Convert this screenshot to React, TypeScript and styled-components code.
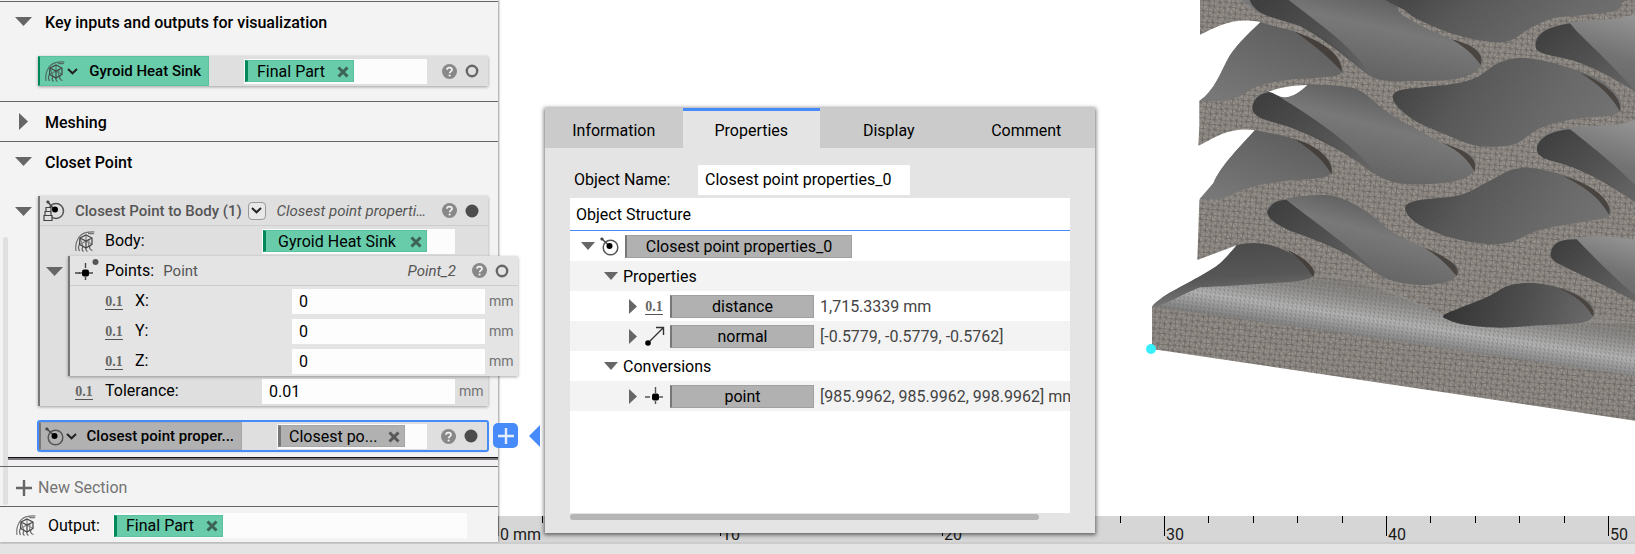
import React from "react";
import styled, { createGlobalStyle, css } from "styled-components";

const GlobalStyle = createGlobalStyle`
  *, *::before, *::after { box-sizing: border-box; }
  body { margin: 0; background: #fff; }
  body, button, input { font-family: Roboto, "Liberation Sans", sans-serif; font-size: 16px; line-height: 20px; color: #000; }
  button { border: 0; padding: 0; background: none; cursor: pointer; }
  svg { display: block; flex: none; }
`;

const Page = styled.div`
  min-height: 100vh;
  display: flex;
  flex-direction: column;
  overflow: hidden;
`;
const Workspace = styled.div`
  flex: 1;
  display: flex;
`;
const Footer = styled.footer`
  height: 12px;
  background: #e4e4e4;
  border-top: 2px solid #cdcdcd;
`;

/* ---------- notebook panel ---------- */

const Notebook = styled.aside`
  position: relative;
  z-index: 1;
  flex: none;
  width: 498px;
  padding-top: 1px;
  background: #f3f3f3;
  box-shadow: 1px 0 2px #999;
`;
const ScrollThumb = styled.div`
  position: absolute;
  left: 3px;
  top: 237px;
  bottom: 37px;
  width: 5px;
  border-radius: 3px;
  background: #e0e0e0;
`;
const Section = styled.section<{ $bottom?: number }>`
  position: relative;
  padding-bottom: ${(p) => p.$bottom ?? 0}px;
  border-top: 1px solid #666;
`;
const SectionHead = styled.div`
  display: flex;
  align-items: center;
  height: 39px;
`;
const SectionTitle = styled.h2`
  margin: 0;
  padding-top: 2px;
  font-size: 16px;
  line-height: 20px;
  font-weight: 500;
`;
const Toggle = styled.button<{ $w: number; $inset: number }>`
  flex: none;
  display: flex;
  align-items: center;
  width: ${(p) => p.$w}px;
  height: 30px;
  padding-left: ${(p) => p.$inset}px;
`;
const BlockLine = styled.div<{ $indent?: boolean }>`
  display: flex;
  align-items: flex-start;
  padding: 15px 10px 0 ${(p) => (p.$indent ? 38 : 0)}px;
`;
const blockLook = css`
  background: #dfdfdf;
  box-shadow: 0 1px 3px rgba(0, 0, 0, 0.35);
`;
const Bar = styled.div<{ $selected?: boolean }>`
  ${blockLook}
  position: relative;
  flex: 1;
  display: flex;
  align-items: center;
  height: 30px;
  ${(p) =>
    p.$selected &&
    css`
      height: 28px;
      outline: 2px solid #478bfa;
      margin-left: 1px;
      border-radius: 1px;
    `}
`;
const SelectedLine = styled.div`
  padding: 16px 11px 7px 38px;
  display: flex;
`;
const Segment = styled.div<{ $green?: boolean; $w: number }>`
  flex: none;
  align-self: stretch;
  display: flex;
  align-items: center;
  gap: 2px;
  width: ${(p) => p.$w}px;
  padding-left: ${(p) => (p.$green ? 5 : 4)}px;
  font-weight: 500;
  background: ${(p) => (p.$green ? "#68ccab" : "#b1b1b1")};
  border: 1px solid ${(p) => (p.$green ? "#5bc19f" : "#a6a6a6")};
  border-left: 2px solid ${(p) => (p.$green ? "#00875c" : "#777")};
`;
const SegmentName = styled.span`
  margin-left: auto;
  padding-right: 7px;
  font-size: 15px;
  white-space: nowrap;
`;
const Slot = styled.div<{ $w?: number; $left?: number }>`
  display: flex;
  align-items: center;
  height: 25px;
  padding: 0 1px;
  background: #fcfcfc;
  margin-left: ${(p) => p.$left ?? 0}px;
  ${(p) => (p.$w ? `flex: none; width: ${p.$w}px;` : "flex: 1;")}
`;
const Chip = styled.span<{ $green?: boolean; $w: number; $pad: number }>`
  display: flex;
  align-items: center;
  justify-content: space-between;
  width: ${(p) => p.$w}px;
  height: 22px;
  padding: 1px 4px 0 ${(p) => p.$pad}px;
  white-space: nowrap;
  background: ${(p) => (p.$green ? "#68ccab" : "#b1b1b1")};
  border: 1px solid ${(p) => (p.$green ? "#5bc19f" : "#a6a6a6")};
  border-left: 3px solid ${(p) => (p.$green ? "#00875c" : "#777")};
`;
const Badges = styled.div`
  display: flex;
  align-items: center;
  gap: 8px;
  margin-left: auto;
  padding-right: 9px;
`;
const Block = styled.div<{ $inner?: boolean }>`
  ${blockLook}
  flex: 1;
  min-width: 0;
  border-left: 2px solid #777;
  ${(p) =>
    p.$inner &&
    css`
      position: relative;
      background: #e4e4e4;
      margin-right: -30px;
    `}
`;
const BlockHead = styled.div`
  position: relative;
  display: flex;
  align-items: center;
  height: 30px;
  white-space: nowrap;
  border-bottom: 1px solid #cdcdcd;
`;
const Nested = styled.div`
  display: flex;
`;
const Field = styled.div<{ $pad: number }>`
  display: flex;
  align-items: center;
  height: 30px;
  padding-left: ${(p) => p.$pad}px;
`;
const FieldIcon = styled.span`
  flex: none;
  width: 30px;
`;
const FieldLabel = styled.label<{ $w: number }>`
  flex: none;
  width: ${(p) => p.$w}px;
`;
const NumberBox = styled.input`
  width: 193px;
  height: 25px;
  padding: 0 7px;
  border: 0;
  background: #fdfdfd;
`;
const Unit = styled.span`
  padding-left: 4px;
  font-size: 14px;
  color: #737373;
`;
const HeadIcon = styled.span`
  flex: none;
  width: 35px;
  padding-left: 2px;
`;
const HeadName = styled.span`
  font-size: 15px;
  font-weight: 500;
  color: #555;
`;
const Muted = styled.span`
  margin-left: 9px;
  font-size: 15px;
  color: #555;
`;
const ObjectName = styled.em`
  flex: 1;
  padding-right: 16px;
  font-size: 15px;
  text-align: right;
  color: #555;
`;
const Overload = styled.button`
  display: grid;
  place-items: center;
  width: 18px;
  height: 18px;
  margin-left: 6px;
  border: 1px solid #999;
  border-radius: 4px;
  background: #e8e8e8;
`;
const Decimal = styled.span`
  display: inline-block;
  width: 18px;
  border-bottom: 1px solid #555;
  font: 700 14px/14px "Liberation Serif", serif;
  color: #666;
  text-align: center;
`;
const AddButton = styled.button`
  position: absolute;
  left: calc(100% + 6px);
  top: 1px;
  display: grid;
  place-items: center;
  width: 25px;
  height: 25px;
  border-radius: 5px;
  background: #478bfa;
`;
const EndOfSection = styled.div`
  height: 9px;
  margin-left: 8px;
  border-top: 1px solid #111;
  background: linear-gradient(#777 2px, #f3f0f3 2px);
`;
const NewSection = styled.button`
  display: flex;
  align-items: center;
  gap: 6px;
  height: 39px;
  padding: 2px 0 0 16px;
  color: #737373;
`;
const OutputRow = styled.div`
  display: flex;
  align-items: center;
  height: 35px;
  padding: 2px 31px 0 16px;
`;
const OutputLabel = styled.span`
  width: 65px;
  margin-left: 12px;
`;

/* ---------- viewport ---------- */

const Viewport = styled.main`
  position: relative;
  flex: 1;
  min-width: 0;
  display: flex;
  flex-direction: column;
  justify-content: space-between;
  align-items: stretch;
`;
const Scene = styled.div`
  display: flex;
  justify-content: flex-end;
  overflow: hidden;
`;
const Ruler = styled.div`
  display: flex;
  height: 26px;
  overflow: hidden;
  background: #d6d6d6;
`;
const Major = styled.div`
  position: relative;
  flex: none;
  display: flex;
  width: 222px;
`;
const Tick = styled.i<{ $major?: boolean }>`
  flex: 1;
  height: ${(p) => (p.$major ? 20 : 7)}px;
  border-left: 1px solid #000;
`;
const MajorLabel = styled.span`
  position: absolute;
  left: 2px;
  bottom: 0;
  line-height: 14px;
  color: #1a1a1a;
`;

/* ---------- properties popover ---------- */

const Popover = styled.section`
  position: absolute;
  left: 47px;
  top: 108px;
  width: 550px;
  background: #e4e4e4;
  box-shadow: 0 1px 4px 1px rgba(0, 0, 0, 0.55);
`;
const Pointer = styled.svg`
  position: absolute;
  left: -16px;
  top: 317px;
`;
const Tabs = styled.div`
  display: grid;
  grid-template-columns: repeat(4, 1fr);
`;
const Tab = styled.button<{ $on?: boolean }>`
  height: 40px;
  padding-top: ${(p) => (p.$on ? 3 : 6)}px;
  background: ${(p) => (p.$on ? "#e4e4e4" : "#cbcbcb")};
  border-top: ${(p) => (p.$on ? "3px solid #478bfa" : "0")};
`;
const PopBody = styled.div`
  padding: 17px 25px 13px 25px;
`;
const NameRow = styled.div`
  display: flex;
  align-items: center;
  height: 30px;
  padding-left: 4px;
`;
const NameLabel = styled.label`
  width: 124px;
`;
const NameBox = styled.input`
  width: 212px;
  height: 30px;
  padding: 0 7px 1px;
  border: 0;
  background: #fff;
`;
const Structure = styled.div`
  height: 315px;
  margin-top: 3px;
  overflow: hidden;
  background: #fff;
`;
const StructureHead = styled.div`
  height: 33px;
  padding: 7px 6px 0;
  border-bottom: 1px solid #478bfa;
`;
const TreeRow = styled.div<{ $depth: number; $shade?: boolean }>`
  display: flex;
  align-items: center;
  height: 30px;
  padding-left: ${(p) => 11 + p.$depth * 23}px;
  background: ${(p) => (p.$shade ? "#f3f3f3" : "#fff")};
`;
const TreeToggle = styled.button<{ $w: number; $inset?: number }>`
  flex: none;
  width: ${(p) => p.$w}px;
  padding-left: ${(p) => p.$inset ?? 0}px;
`;
const TreeIcon = styled.span<{ $w: number }>`
  flex: none;
  width: ${(p) => p.$w}px;
`;
const TreeText = styled.span`
  padding-top: 2px;
`;
const Tag = styled.span<{ $w: number }>`
  flex: none;
  width: ${(p) => p.$w}px;
  height: 23px;
  line-height: 22px;
  text-align: center;
  background: #b1b1b1;
  border: 1px solid #a0a0a0;
  border-left: 2px solid #777;
`;
const Value = styled.span`
  margin-left: 6px;
  padding-top: 2px;
  color: #444;
  white-space: nowrap;
`;
const HScroll = styled.div`
  width: 469px;
  height: 6px;
  margin-top: 1px;
  border-radius: 3px;
  background: #b5b5b5;
`;

/* ---------- icons ---------- */

const Down = ({ w = 17 }: { w?: number }) => (
  <svg width={w} height={w === 17 ? 9 : 8} viewBox="0 0 17 9" preserveAspectRatio="none"><path d="M0 0H17L8.500 9Z" fill="#666" /></svg>
);
const Right = ({ inset = 0 }: { inset?: number }) => (
  <svg width={9 + inset} height="17" viewBox={`${-inset} 0 ${9 + inset} 17`}><path d="M0 0L9 8.500L0 17Z" fill="#666" /></svg>
);
const SmallRight = () => (
  <svg width="8" height="15" viewBox="0 0 8 15"><path d="M0 0L8 7.500L0 15Z" fill="#666" /></svg>
);
const Chevron = () => (
  <svg width="11" height="7" viewBox="0 0 11 7"><path d="M1 1L5.500 5.300L10 1" fill="none" stroke="#222" strokeWidth="2" /></svg>
);
const Cross = () => (
  <svg width="12" height="12" viewBox="0 0 12 12" aria-hidden="true">
    <path d="M1.500 1.500L10.500 10.500M10.500 1.500L1.500 10.500" stroke="#222" strokeOpacity=".62" strokeWidth="3" />
  </svg>
);
const BodyIcon = () => (
  <svg width="20" height="21" viewBox="0 0 20 21" fill="none" stroke="#444" strokeWidth="1.200">
    <path d="M1 20C0 14 2 7 6 4C9 1.500 14 .8 19.500 1M13 2.500C15 2.500 17 3 19 2.500" strokeOpacity=".7" />
    <path d="M5 7L11 4L17 7V13.500L11 17L4.500 13.500ZM5 7L11 10L17 7M11 10V17" />
    <path d="M11 4V10M4.500 13.500L11 10L17 13.500M5 7L8 15.500M14 8.500L13.500 15.500" strokeOpacity=".6" />
    <path d="M4.500 13.500C3 15.500 3.500 18 4.500 20M8 16C6.500 17.500 7 19.500 8.500 20.500M11 17C10.500 19 11.500 20 12.500 20.500M15 15C14 17 15 19 17.500 19.500" strokeOpacity=".8" />
  </svg>
);
const ClosestIcon = () => (
  <svg width="19" height="19" viewBox="0 0 19 19">
    <circle cx="10.500" cy="10.500" r="7.300" fill="none" stroke="#555" strokeWidth="1.500" />
    <path d="M1 1L9 8.500" stroke="#444" strokeWidth="1.400" />
    <circle cx="2" cy="2" r="1.600" fill="#444" />
    <circle cx="9.500" cy="9" r="3" fill="#000" />
  </svg>
);
const ClosestListIcon = () => (
  <svg width="23" height="22" viewBox="-1 0 23 22">
    <circle cx="13" cy="11" r="7.500" fill="none" stroke="#555" strokeWidth="1.500" />
    <path d="M4 1L10 8" stroke="#444" strokeWidth="1.400" />
    <circle cx="5" cy="2" r="1.600" fill="#444" />
    <circle cx="12" cy="9.500" r="3" fill="#000" />
    <path d="M3 7.500H8V11.500H3ZM2 11.500H8V15.500H2ZM1 15.500H9V20.500H1Z" fill="#dfdfdf" stroke="#444" strokeWidth="1.200" />
  </svg>
);
const PointIcon = () => (
  <svg width="27" height="24" viewBox="-3 0 27 24">
    <path d="M0 14H5M13 14H18M10.500 4V9M10.500 18V21" stroke="#444" strokeWidth="1.400" />
    <rect x="7" y="10.500" width="7" height="7" rx="2" fill="#000" />
    <path d="M4 14H7" stroke="#444" strokeWidth="1.400" />
    <circle cx="20.500" cy="3" r="3" fill="#555" />
  </svg>
);
const VectorIcon = () => (
  <svg width="20" height="20" viewBox="0 0 20 20">
    <path d="M3 17L18 2M11 1.500H18.500V9" fill="none" stroke="#333" strokeWidth="1.400" />
    <circle cx="3" cy="17" r="2.800" fill="#000" />
  </svg>
);
const TreePointIcon = () => (
  <svg width="18" height="18" viewBox="0 0 18 18">
    <path d="M0 10H5M13 10H18M10.500 0V6M10.500 14V17" stroke="#555" strokeWidth="1.400" />
    <rect x="7" y="6.500" width="7" height="7" rx="2" fill="#000" />
  </svg>
);
const Help = () => (
  <svg width="15" height="15" viewBox="0 0 15 15">
    <circle cx="7.500" cy="7.500" r="7.500" fill="#888" />
    <path d="M5 5.800C5 2.800 10 2.900 10 5.700C10 7.400 7.600 7.300 7.600 9.300" fill="none" stroke="#f3f3f3" strokeWidth="1.700" />
    <circle cx="7.600" cy="11.500" r="1.100" fill="#f3f3f3" />
  </svg>
);
const State = ({ solid }: { solid?: boolean }) => (
  <svg width="14" height="14" viewBox="0 0 14 14">
    <circle cx="7" cy="7" r={solid ? 6.500 : 5.200} fill={solid ? "#4c4c4c" : "none"} stroke="#666" strokeWidth={solid ? 0 : 2.400} />
  </svg>
);
const Plus = ({ color, size }: { color: string; size: number }) => (
  <svg width={size} height={size} viewBox="0 0 16 16"><path d="M8 0V16M0 8H16" stroke={color} strokeWidth="2.400" /></svg>
);

/* ---------- heat sink mesh ---------- */

type Pt = [number, number];

// Closed Catmull-Rom spline through the points.
function loop(p: Pt[]): string {
  const n = p.length;
  let d = `M${p[0][0]} ${p[0][1]}`;
  for (let i = 0; i < n; i++) {
    const a = p[(i - 1 + n) % n], b = p[i], c = p[(i + 1) % n], e = p[(i + 2) % n];
    d += `C${b[0] + (c[0] - a[0]) / 6} ${b[1] + (c[1] - a[1]) / 6} ${c[0] - (e[0] - b[0]) / 6} ${c[1] - (e[1] - b[1]) / 6} ${c[0]} ${c[1]}`;
  }
  return d + "Z";
}

// A tileable, slightly irregular triangulation.
const CELL = 16;
const CELLS = 12;
function triangulation(): string {
  const node = (i: number, j: number): Pt => {
    const u = ((i % CELLS) + CELLS) % CELLS, v = ((j % CELLS) + CELLS) % CELLS;
    const r = Math.abs(Math.sin(u * 12.9898 + v * 78.233) * 43758.5453) % 1;
    const s = Math.abs(Math.sin(u * 39.346 + v * 11.135) * 24634.6345) % 1;
    return [Math.round(i * CELL + (r - 0.5) * 4), Math.round(j * CELL + (s - 0.5) * 4)];
  };
  let d = "";
  for (let j = -1; j <= CELLS; j++) {
    for (let i = -1; i <= CELLS; i++) {
      const a = node(i, j), b = node(i + 1, j), c = node(i, j + 1), e = node(i + 1, j + 1);
      d += `M${b}L${a}L${c}`;
      d += (i * 7 + j * 5 + 24) % 12 % 3 === 0 ? `M${b}L${c}` : `M${a}L${e}`;
    }
  }
  return d;
}
const meshLines = triangulation();

const silhouette =
  "M180 0V104C235 78 280 50 362 66C320 105 280 145 262 180C240 220 225 270 178 303V375L175 437C225 415 260 380 345 390C300 440 240 500 220 550L178 600L172 780L290 736C265 765 240 795 215 808C150 850 70 880 36 920V1047L1485 1262V0Z";

const fins = [
  "M362 66C420 88 470 85 540 130C590 160 612 190 606 215C600 232 560 230 500 235C420 240 360 250 320 275C280 305 240 304 178 303C225 270 240 220 262 180C280 145 320 105 362 66Z",
  "M345 390C400 402 460 410 510 435C550 460 580 490 577 510C570 540 520 534 460 541C380 548 320 560 280 583L240 598H178L220 550C240 500 300 440 345 390Z",
  "M290 736C360 716 420 740 480 775C520 800 530 820 515 832C490 845 440 848 380 850C300 856 240 860 180 862C110 890 80 915 36 920C70 880 150 850 215 808C240 795 265 765 290 736Z",
];

const tubes: Pt[][] = [
  [[320, -30], [345, 30], [400, 53], [480, 78], [570, 125], [640, 182], [710, 236], [830, 243], [950, 236], [1010, 212], [1028, 178], [1005, 143], [930, 116], [850, 80], [780, 38], [730, -30]],
  [[337, 320], [352, 290], [390, 272], [500, 254], [600, 258], [665, 275], [740, 335], [820, 382], [900, 425], [990, 462], [1007, 495], [980, 532], [900, 550], [780, 550], [700, 520], [620, 460], [540, 415], [440, 378], [360, 355]],
  [[381, 635], [395, 610], [430, 598], [500, 587], [590, 590], [680, 635], [760, 697], [850, 742], [930, 782], [955, 810], [930, 842], [850, 855], [760, 843], [700, 813], [630, 765], [560, 730], [450, 692], [400, 665]],
];
const basins: Pt[][] = [
  [[765, -30], [800, 35], [870, 75], [960, 108], [1050, 125], [1110, 122], [1170, 85], [1240, 55], [1330, 45], [1425, 33], [1445, 10], [1445, -30]],
  [[758, 292], [780, 271], [850, 262], [950, 250], [1010, 232], [1070, 192], [1130, 175], [1200, 180], [1300, 207], [1380, 240], [1432, 285], [1443, 325], [1415, 346], [1300, 358], [1200, 385], [1130, 430], [1070, 440], [1000, 435], [920, 405], [830, 365], [780, 328]],
  [[797, 618], [840, 600], [960, 585], [1050, 542], [1120, 508], [1190, 506], [1290, 532], [1370, 575], [1412, 625], [1400, 652], [1320, 667], [1200, 690], [1110, 726], [1040, 732], [940, 715], [850, 680], [808, 650]],
];
const scoops: Pt[][] = [
  [[1560, 60], [1420, 57], [1290, 68], [1225, 85], [1190, 112], [1187, 138], [1205, 158], [1280, 175], [1360, 205], [1490, 277], [1560, 330]],
  [[1560, 375], [1420, 376], [1320, 380], [1240, 393], [1198, 422], [1191, 450], [1215, 475], [1300, 502], [1400, 548], [1490, 610], [1560, 660]],
  [[1560, 735], [1470, 717], [1400, 710], [1300, 714], [1243, 735], [1232, 765], [1260, 795], [1350, 835], [1490, 907], [1560, 950]],
];
const lowHole: Pt[] = [[911, 946], [960, 924], [1040, 892], [1110, 856], [1190, 850], [1280, 870], [1345, 905], [1362, 940], [1330, 967], [1200, 976], [1080, 983], [980, 975], [925, 960]];

// Shadowed inner walls at the left end of each tube.
const shades = [
  "M327 -5H440C540 75 630 130 700 235C640 195 570 125 480 78C400 50 345 50 327 -5Z",
  "M337 320C345 285 370 278 395 276C500 340 640 430 710 523C620 460 540 415 440 378C370 358 335 350 337 320Z",
  "M381 635C395 604 420 600 440 600C540 680 640 745 710 820C640 765 560 730 450 692C395 665 385 655 381 635Z",
  "M1187 138C1187 100 1225 80 1290 70C1320 110 1390 165 1490 277C1400 220 1320 180 1240 168C1195 158 1187 150 1187 138Z",
  "M1191 450C1190 415 1235 392 1290 388C1330 420 1410 480 1490 560V610C1400 548 1320 504 1240 484C1200 475 1192 460 1191 450Z",
  "M1232 765C1235 725 1265 718 1310 718C1370 780 1430 840 1490 890V907C1400 855 1320 825 1265 795C1240 785 1232 775 1232 765Z",
];
const rims = [
  "M465 95C540 125 600 150 606 215C575 180 530 140 465 95Z",
  "M465 418C540 440 580 480 575 525C555 485 520 455 465 418Z",
  "M435 746C500 775 535 810 519 830C500 800 480 775 435 746Z",
  "M1320 218C1400 250 1445 290 1441 335C1415 290 1380 255 1320 218Z",
  "M935 118C1000 135 1035 160 1022 195C1000 165 980 145 935 118Z",
  "M910 430C990 455 1015 480 1003 515C985 480 960 455 910 430Z",
  "M850 742C930 775 965 800 950 828C925 800 900 770 850 742Z",
  "M1255 865C1330 885 1370 925 1359 950C1335 910 1310 890 1255 865Z",
  "M1270 528C1350 550 1420 600 1408 645C1375 590 1340 565 1270 528Z",
];

const HeatSink = () => (
  <svg width="495" height="430" viewBox="0 0 1485 1290" role="img" aria-label="Gyroid heat sink mesh">
    <defs>
      <pattern id="tri" width={CELL * CELLS} height={CELL * CELLS} patternUnits="userSpaceOnUse" patternTransform="rotate(5)">
        <rect width={CELL * CELLS} height={CELL * CELLS} fill="#98928c" />
        <path d={meshLines} stroke="#686460" strokeWidth="2.400" fill="none" />
      </pattern>
      <pattern id="grain" width="9" height="12" patternUnits="userSpaceOnUse" patternTransform="rotate(-14)">
        <path d="M0 3H5M4 9H9" stroke="#c4c4c4" strokeOpacity=".15" strokeWidth="2.500" />
      </pattern>
      <pattern id="gloss" width="13" height="12" patternUnits="userSpaceOnUse" patternTransform="rotate(7)">
        <path d="M0 0H13M0 6H13M0 0L6 6L13 12M6 0V12" stroke="#4f4f4f" strokeOpacity=".4" strokeWidth="1.800" fill="none" />
      </pattern>
      <linearGradient id="tube" x1="0.250" y1="0.900" x2="0.700" y2="0.100">
        <stop offset="0" stopColor="#5c5c5c" /><stop offset=".3" stopColor="#686868" />
        <stop offset=".62" stopColor="#767676" /><stop offset="1" stopColor="#575757" />
      </linearGradient>
      <linearGradient id="basin" x1="0" y1="0.400" x2="1" y2="0.650">
        <stop offset="0" stopColor="#404040" /><stop offset=".3" stopColor="#555" />
        <stop offset=".7" stopColor="#666" /><stop offset="1" stopColor="#707070" />
      </linearGradient>
      <linearGradient id="scoop" x1="0.300" y1="1" x2="0.700" y2="0">
        <stop offset="0" stopColor="#595959" /><stop offset=".6" stopColor="#707070" /><stop offset="1" stopColor="#939393" />
      </linearGradient>
      <linearGradient id="fin" x1="0.800" y1="0.100" x2="0.200" y2="1">
        <stop offset="0" stopColor="#5a5a5a" /><stop offset="1" stopColor="#757575" />
      </linearGradient>
      <linearGradient id="finLow" x1="0.300" y1="0.100" x2="0.450" y2="1">
        <stop offset="0" stopColor="#484848" /><stop offset=".5" stopColor="#535353" /><stop offset="1" stopColor="#767676" />
      </linearGradient>
      <linearGradient id="shade" x1="0" y1="0.200" x2="1" y2="1">
        <stop offset="0" stopColor="#3b3b3b" /><stop offset=".5" stopColor="#4e4e4e" /><stop offset="1" stopColor="#646464" />
      </linearGradient>
      <linearGradient id="dark" x1="0" y1="0.500" x2="1" y2="0.600">
        <stop offset="0" stopColor="#2e2e2e" /><stop offset=".5" stopColor="#484848" /><stop offset="1" stopColor="#666" />
      </linearGradient>
      <linearGradient id="shine" gradientUnits="userSpaceOnUse" x1="620" y1="810" x2="590" y2="1005">
        <stop offset="0" stopColor="#8d8984" stopOpacity="0" /><stop offset=".35" stopColor="#969593" stopOpacity=".8" />
        <stop offset=".68" stopColor="#c0c0c0" /><stop offset="1" stopColor="#848484" />
      </linearGradient>
    </defs>
    <path d={silhouette} fill="url(#tri)" />
    <path d="M36 920C100 900 140 860 180 858C300 855 430 850 515 832C650 800 760 880 910 946L1200 930L1485 960V1128L500 985Z" fill="url(#shine)" />
    <path d="M36 920C100 900 140 860 180 858C300 855 430 850 515 832C650 830 760 880 910 946L1200 970L1485 970V1128L500 985Z" fill="url(#gloss)" />
    {fins.map((d, i) => (
      <g key={i}><path d={d} fill={i === 2 ? "url(#finLow)" : "url(#fin)"} /><path d={d} fill="url(#grain)" /></g>
    ))}
    {tubes.map((p, i) => (
      <path key={i} d={loop(p)} fill="url(#tube)" />
    ))}
    {basins.map((p, i) => (
      <path key={i} d={loop(p)} fill="url(#basin)" />
    ))}
    {scoops.map((p, i) => (
      <path key={i} d={loop(p)} fill="url(#scoop)" />
    ))}
    <path d={loop(lowHole)} fill="url(#dark)" />
    {shades.map((d, i) => (
      <path key={i} d={d} fill="url(#shade)" />
    ))}
    {rims.map((d, i) => (
      <path key={i} d={d} fill="#45403b" />
    ))}
    {[...tubes, ...basins, ...scoops, lowHole].map((p, i) => (
      <path key={i} d={loop(p)} fill="url(#grain)" />
    ))}
    <path d="M386 275C420 262 460 256 502 255C480 275 460 290 435 292C415 292 405 280 386 275Z" fill="#fff" />
    <circle cx="33" cy="1047" r="15" fill="#37f0fb" />
  </svg>
);

/* ---------- composed parts ---------- */

const RefChip = ({ text, w, green, pad = 9 }: { text: string; w: number; green?: boolean; pad?: number }) => (
  <Chip $w={w} $green={green} $pad={pad}>
    {text}
    <button aria-label={`Remove ${text}`}><Cross /></button>
  </Chip>
);

const Status = ({ solid }: { solid?: boolean }) => (
  <Badges>
    <button aria-label="Help"><Help /></button>
    <State solid={solid} />
  </Badges>
);

const LengthField = ({ name, value }: { name: string; value: string }) => (
  <Field $pad={35}>
    <FieldIcon><Decimal>0.1</Decimal></FieldIcon>
    <FieldLabel $w={157} htmlFor={`field-${name}`}>{name}:</FieldLabel>
    <NumberBox id={`field-${name}`} defaultValue={value} />
    <Unit>mm</Unit>
  </Field>
);

export default function App() {
  return (
    <Page>
      <GlobalStyle />
      <Workspace>
        <Notebook>
          <ScrollThumb />
          <Section $bottom={15}>
            <SectionHead>
              <Toggle $w={45} $inset={15} aria-label="Collapse section"><Down /></Toggle>
              <SectionTitle>Key inputs and outputs for visualization</SectionTitle>
            </SectionHead>
            <BlockLine $indent>
              <Bar>
                <Segment $w={171} $green>
                  <BodyIcon />
                  <Chevron />
                  <SegmentName>Gyroid Heat Sink</SegmentName>
                </Segment>
                <Slot $w={183} $left={35}><RefChip text="Final Part" w={109} green /></Slot>
                <Status />
              </Bar>
            </BlockLine>
          </Section>
          <Section>
            <SectionHead>
              <Toggle $w={45} $inset={15} aria-label="Expand section"><Right inset={4} /></Toggle>
              <SectionTitle>Meshing</SectionTitle>
            </SectionHead>
          </Section>
          <Section>
            <SectionHead>
              <Toggle $w={45} $inset={15} aria-label="Collapse section"><Down /></Toggle>
              <SectionTitle>Closet Point</SectionTitle>
            </SectionHead>
            <BlockLine>
              <Toggle $w={38} $inset={15} aria-label="Collapse block"><Down /></Toggle>
              <Block>
                <BlockHead>
                  <HeadIcon><ClosestListIcon /></HeadIcon>
                  <HeadName>Closest Point to Body (1)</HeadName>
                  <Overload aria-label="Choose overload"><Chevron /></Overload>
                  <ObjectName>Closest point properti…</ObjectName>
                  <Status solid />
                </BlockHead>
                <Field $pad={35}>
                  <FieldIcon><BodyIcon /></FieldIcon>
                  <FieldLabel as="span" $w={157}>Body:</FieldLabel>
                  <Slot $w={193}><RefChip text="Gyroid Heat Sink" w={164} pad={12} green /></Slot>
                </Field>
                <Nested>
                  <Toggle $w={28} $inset={6} aria-label="Collapse points"><Down /></Toggle>
                  <Block $inner>
                    <BlockHead>
                      <HeadIcon><PointIcon /></HeadIcon>
                      <span>Points:</span>
                      <Muted>Point</Muted>
                      <ObjectName>Point_2</ObjectName>
                      <Status />
                    </BlockHead>
                    <LengthField name="X" value="0" />
                    <LengthField name="Y" value="0" />
                    <LengthField name="Z" value="0" />
                  </Block>
                </Nested>
                <LengthField name="Tolerance" value="0.01" />
              </Block>
            </BlockLine>
            <SelectedLine>
              <Bar $selected>
                <Segment $w={203}>
                  <ClosestIcon />
                  <Chevron />
                  <SegmentName>Closest point proper...</SegmentName>
                </Segment>
                <Slot $w={150} $left={35}><RefChip text="Closest po..." w={127} pad={8} /></Slot>
                <Status solid />
                <AddButton aria-label="Add block"><Plus color="#e6eefc" size={16} /></AddButton>
              </Bar>
            </SelectedLine>
            <EndOfSection />
          </Section>
          <Section>
            <NewSection><Plus color="#666" size={16} />New Section</NewSection>
          </Section>
          <Section>
            <OutputRow>
              <BodyIcon />
              <OutputLabel>Output:</OutputLabel>
              <Slot><RefChip text="Final Part" w={109} green /></Slot>
            </OutputRow>
          </Section>
        </Notebook>

        <Viewport>
          <Scene><HeatSink /></Scene>
          <Ruler>
            {["0 mm", "10", "20", "30", "40", "50"].map((label) => (
              <Major key={label}>
                <Tick $major /><Tick /><Tick /><Tick /><Tick />
                <MajorLabel>{label}</MajorLabel>
              </Major>
            ))}
          </Ruler>

          <Popover aria-label="Block details">
            <Pointer width="11" height="22" viewBox="0 0 11 22"><path d="M11 0V22L0 11Z" fill="#478bfa" /></Pointer>
            <Tabs role="tablist">
              <Tab role="tab">Information</Tab>
              <Tab role="tab" $on aria-selected="true">Properties</Tab>
              <Tab role="tab">Display</Tab>
              <Tab role="tab">Comment</Tab>
            </Tabs>
            <PopBody>
              <NameRow>
                <NameLabel htmlFor="object-name">Object Name:</NameLabel>
                <NameBox id="object-name" defaultValue="Closest point properties_0" />
              </NameRow>
              <Structure>
                <StructureHead>Object Structure</StructureHead>
                <TreeRow $depth={0}>
                  <TreeToggle $w={19} aria-label="Collapse"><Down w={14} /></TreeToggle>
                  <TreeIcon $w={25}><ClosestIcon /></TreeIcon>
                  <Tag $w={227}>Closest point properties_0</Tag>
                </TreeRow>
                <TreeRow $depth={1} $shade>
                  <TreeToggle $w={19} aria-label="Collapse"><Down w={14} /></TreeToggle>
                  <TreeText>Properties</TreeText>
                </TreeRow>
                <TreeRow $depth={2}>
                  <TreeToggle $w={18} $inset={2} aria-label="Expand"><SmallRight /></TreeToggle>
                  <TreeIcon $w={25}><Decimal>0.1</Decimal></TreeIcon>
                  <Tag $w={144}>distance</Tag>
                  <Value>1,715.3339 mm</Value>
                </TreeRow>
                <TreeRow $depth={2} $shade>
                  <TreeToggle $w={18} $inset={2} aria-label="Expand"><SmallRight /></TreeToggle>
                  <TreeIcon $w={25}><VectorIcon /></TreeIcon>
                  <Tag $w={144}>normal</Tag>
                  <Value>[-0.5779, -0.5779, -0.5762]</Value>
                </TreeRow>
                <TreeRow $depth={1}>
                  <TreeToggle $w={19} aria-label="Collapse"><Down w={14} /></TreeToggle>
                  <TreeText>Conversions</TreeText>
                </TreeRow>
                <TreeRow $depth={2} $shade>
                  <TreeToggle $w={18} $inset={2} aria-label="Expand"><SmallRight /></TreeToggle>
                  <TreeIcon $w={25}><TreePointIcon /></TreeIcon>
                  <Tag $w={144}>point</Tag>
                  <Value>[985.9962, 985.9962, 998.9962] mm</Value>
                </TreeRow>
              </Structure>
              <HScroll />
            </PopBody>
          </Popover>
        </Viewport>
      </Workspace>
      <Footer />
    </Page>
  );
}
